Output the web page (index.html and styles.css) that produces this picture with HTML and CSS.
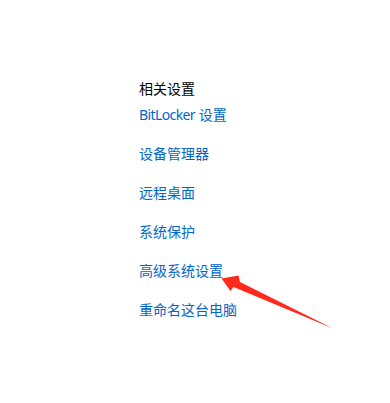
FILE: index.html
```html
<!DOCTYPE html>
<html lang="zh-CN">
<head>
<meta charset="utf-8">
<link rel="stylesheet" href="styles.css">
</head>
<body>
<div class="panel">
  <div class="title">相关设置</div>
  <ul class="links">
    <li class="first"><span class="latin">BitLocker</span> 设置</li>
    <li>设备管理器</li>
    <li>远程桌面</li>
    <li>系统保护</li>
    <li>高级系统设置</li>
    <li>重命名这台电脑</li>
  </ul>
</div>
<svg class="arrow" width="390" height="403" viewBox="0 0 390 403">
  <polygon points="221.5,278.5 238.5,275.5 240,282 333,328.5 233.5,287 230.5,291" fill="#fe2a1c"/>
</svg>
</body>
</html>
```
FILE: styles.css
```css
html, body {
  margin: 0;
  padding: 0;
  background: #ffffff;
}
body {
  width: 390px;
  height: 403px;
  position: relative;
  overflow: hidden;
  font-family: "Noto Sans", "Noto Sans CJK SC", sans-serif;
  font-size: 14px;
}
.panel {
  padding: 79px 0 0 139px;
}
.title {
  color: #000000;
  line-height: 20px;
  height: 20px;
}
.links {
  list-style: none;
  margin: 0;
  padding: 0;
  color: #0066cc;
}
.links li {
  line-height: 20px;
  height: 20px;
  margin-top: 19px;
}
.links li.first {
  margin-top: 6px;
}
.latin {
  letter-spacing: -0.6px;
}
.arrow {
  position: absolute;
  left: 0;
  top: 0;
}
```
